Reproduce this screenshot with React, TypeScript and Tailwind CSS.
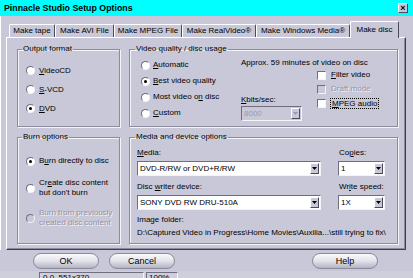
import React from "react";

const bg = "bg-[#c8c8d8]";
const sunken = "border border-t-[#6e6e80] border-l-[#6e6e80] border-r-[#f4f4f8] border-b-[#f4f4f8]";
const raised = "border border-t-white border-l-white border-r-[#4a4a5a] border-b-[#4a4a5a]";
const dim = "text-[#9494a6] [text-shadow:1px_1px_0_#f4f4f8]";

function Radio({ checked = false, disabled = false }: { checked?: boolean; disabled?: boolean }) {
  return (
    <span
      className={`flex h-[9px] w-[9px] shrink-0 items-center justify-center rounded-full ${sunken} ${
        disabled ? bg : "bg-white"
      }`}
    >
      {checked && <span className="h-[3px] w-[3px] rounded-full bg-black" />}
    </span>
  );
}

function Check({ disabled = false }: { disabled?: boolean }) {
  return <span className={`h-[9px] w-[9px] shrink-0 ${sunken} ${disabled ? bg : "bg-white"}`} />;
}

function Arrow() {
  return (
    <span className={`flex h-[11px] w-[9px] shrink-0 items-center justify-center ${bg} ${raised}`}>
      <svg width="5" height="3" viewBox="0 0 5 3">
        <polygon points="0,0 5,0 2.5,3" fill="#000" />
      </svg>
    </span>
  );
}

function Select({ value, className, disabled = false }: { value: string; className: string; disabled?: boolean }) {
  return (
    <div
      className={`flex h-[15px] items-center pr-[1px] ${sunken} ${className} ${
        disabled ? `${bg} text-[#9a9aac]` : "bg-white"
      }`}
    >
      <span className="flex-1 truncate pl-[2px] leading-[10px]">{value}</span>
      {disabled ? (
        <span className={`flex h-[11px] w-[9px] items-center justify-center ${bg} ${raised}`}>
          <svg width="5" height="3" viewBox="0 0 5 3">
            <polygon points="0,0 5,0 2.5,3" fill="#9a9aac" />
          </svg>
        </span>
      ) : (
        <Arrow />
      )}
    </div>
  );
}

function Group({
  title,
  className,
  legendClass,
  children
}: {
  title: string;
  className: string;
  legendClass: string;
  children: React.ReactNode;
}) {
  return (
    <fieldset
      className={`border border-[#8c8c9e] shadow-[inset_1px_1px_0_#f4f4f8,1px_1px_0_#f4f4f8] ${className}`}
    >
      <legend className={`px-[1px] leading-[12px] ${legendClass}`}>{title}</legend>
      {children}
    </fieldset>
  );
}

const tabs = [
  { label: "Make tape", w: "w-[46px]" },
  { label: "Make AVI File", w: "w-[59px]" },
  { label: "Make MPEG File", w: "w-[68px]" },
  { label: "Make RealVideo®", w: "w-[74px]" },
  { label: "Make Windows Media®", w: "w-[94px]" }
];

export default function App() {
  return (
    <div
      className={`flex h-[278px] w-[413px] flex-col overflow-hidden ${bg} font-['Liberation_Sans',Arial,sans-serif] text-[8px] leading-[10px] text-black`}
    >
      {/* title bar */}
      <div className="flex h-[16px] shrink-0 items-center justify-between bg-[#00ffff] pl-[4px] pr-[5px]">
        <span className="text-[8.8px] font-bold leading-[12px]">Pinnacle Studio Setup Options</span>
        <span className={`flex h-[10px] w-[10px] items-center justify-center ${bg} ${raised} text-[9px] font-bold leading-[8px]`}>
          ×
        </span>
      </div>

      <div className="flex shrink-0 flex-col border-l border-white pl-[5px] pr-[7px]">
        {/* tabs */}
        <div className="flex h-[21px] items-end pl-[3px]">
          {tabs.map((t) => (
            <div
              key={t.label}
              className={`flex h-[13px] ${t.w} items-center justify-center rounded-t-[2px] border-l border-t border-r border-l-white border-t-white border-r-[#4a4a5a]`}
            >
              {t.label}
            </div>
          ))}
          <div
            className={`relative z-10 -mb-[1px] flex h-[17px] w-[49px] items-center justify-center rounded-t-[2px] border-l border-t border-r border-l-white border-t-white border-r-[#4a4a5a] ${bg}`}
          >
            Make disc
          </div>
        </div>

        {/* panel */}
        <div className="h-[213px] border border-t-white border-l-white border-r-[#3e3e4e] border-b-[#3e3e4e] pl-[10px] pt-[5px] shadow-[inset_-1px_-1px_0_#8c8c9e]">
          <div className="grid grid-cols-[103px_269px] grid-rows-[84px_113px] gap-x-[9px] gap-y-[4px]">
            <Group title="Output format" className="h-[84px]" legendClass="ml-[4px]">
              <div className="flex flex-col pl-[8px] pt-[6px]">
                {[
                  { u: "V", rest: "ideoCD" },
                  { u: "S", rest: "-VCD" },
                  { u: "D", rest: "VD", checked: true }
                ].map((r) => (
                  <div key={r.rest} className="flex h-[19px] items-center gap-[4px]">
                    <Radio checked={r.checked} />
                    <span>
                      <u>{r.u}</u>
                      {r.rest}
                    </span>
                  </div>
                ))}
              </div>
            </Group>

            <Group title="Video quality / disc usage" className="h-[84px]" legendClass="ml-[5px]">
              <div className="flex pt-[2px]">
                <div className="flex w-[111px] flex-col pl-[11px]">
                  <div className="flex h-[16px] items-center gap-[3px]">
                    <Radio />
                    <span>
                      <u>A</u>utomatic
                    </span>
                  </div>
                  <div className="flex h-[16px] items-center gap-[3px]">
                    <Radio checked />
                    <span>
                      <u>B</u>est video quality
                    </span>
                  </div>
                  <div className="flex h-[16px] items-center gap-[3px]">
                    <Radio />
                    <span>
                      Most video o<u>n</u> disc
                    </span>
                  </div>
                  <div className="flex h-[16px] items-center gap-[3px]">
                    <Radio />
                    <span>
                      <u>C</u>ustom
                    </span>
                  </div>
                </div>
                <div className="flex flex-1 flex-col">
                  <div className="h-[11px] leading-[11px]">Approx. 59 minutes of video on disc</div>
                  <div className="flex">
                    <div className="flex w-[76px] flex-col">
                      <span className="mt-[27px]">
                        <u>K</u>bits/sec:
                      </span>
                      <Select value="8000" className="mt-[1px] w-[61px]" disabled />
                    </div>
                    <div className="flex flex-col">
                      <div className="flex h-[14px] items-center gap-[5px]">
                        <Check />
                        <span>
                          <u>F</u>ilter video
                        </span>
                      </div>
                      <div className="flex h-[14px] items-center gap-[5px]">
                        <Check disabled />
                        <span className={dim}>Draft mode</span>
                      </div>
                      <div className="flex h-[14px] items-center gap-[4px]">
                        <Check />
                        <span className="border border-dotted border-black px-[1px] leading-[9px]">
                          <u>M</u>PEG audio
                        </span>
                      </div>
                    </div>
                  </div>
                </div>
              </div>
            </Group>

            <Group title="Burn options" className="h-[113px]" legendClass="ml-[4px]">
              <div className="flex flex-col pl-[8px]">
                <div className="mt-[13px] flex items-center gap-[4px]">
                  <Radio checked />
                  <span>
                    B<u>u</u>rn directly to disc
                  </span>
                </div>
                <div className="mt-[12px] flex items-center gap-[4px]">
                  <Radio />
                  <span>
                    Cr<u>e</u>ate disc content
                    <br />
                    but don't burn
                  </span>
                </div>
                <div className="mt-[10px] flex items-center gap-[4px]">
                  <Radio disabled />
                  <span className={dim}>
                    Burn from previously
                    <br />
                    created disc content
                  </span>
                </div>
              </div>
            </Group>

            <Group title="Media and device options" className="h-[113px]" legendClass="ml-[5px]">
              <div className="flex flex-col pl-[7px]">
                <div className="mt-[5px] flex gap-[17px]">
                  <div className="flex w-[184px] flex-col">
                    <span>
                      <u>M</u>edia:
                    </span>
                    <Select value="DVD-R/RW or DVD+R/RW" className="mt-[3px] w-[184px]" />
                  </div>
                  <div className="flex w-[47px] flex-col">
                    <span className="pl-[1px]">
                      Co<u>p</u>ies:
                    </span>
                    <Select value="1" className="mt-[3px] w-[47px]" />
                  </div>
                </div>
                <div className="mt-[6px] flex gap-[17px]">
                  <div className="flex w-[184px] flex-col">
                    <span>
                      Disc <u>w</u>riter device:
                    </span>
                    <Select value="SONY DVD RW DRU-510A" className="mt-[3px] w-[184px]" />
                  </div>
                  <div className="flex w-[47px] flex-col">
                    <span className="pl-[1px]">
                      Wr<u>i</u>te speed:
                    </span>
                    <Select value="1X" className="mt-[3px] w-[47px]" />
                  </div>
                </div>
                <span className="mt-[5px]">Image folder:</span>
                <span className="mt-[3px] whitespace-nowrap">
                  D:\Captured Video in Progress\Home Movies\Auxilia...\still trying to fix\
                </span>
              </div>
            </Group>
          </div>
        </div>
      </div>

      {/* buttons */}
      <div className="mt-[3px] flex h-[16px] shrink-0 items-center pl-[33px] pr-[35px]">
        {["OK", "Cancel"].map((b) => (
          <div
            key={b}
            className="mr-[10px] flex h-[16px] w-[66px] items-center justify-center rounded-full border border-[#8a8a9c] bg-gradient-to-b from-[#fafafc] via-[#e2e2ea] to-[#b4b4c4] text-[9px]"
          >
            {b}
          </div>
        ))}
        <div className="ml-auto flex h-[16px] w-[66px] items-center justify-center rounded-full border border-[#8a8a9c] bg-gradient-to-b from-[#fafafc] via-[#e2e2ea] to-[#b4b4c4] text-[9px]">
          Help
        </div>
      </div>

      {/* status bar */}
      <div className="mt-[2px] flex h-[16px] shrink-0 items-start bg-[#cfcfdc] pt-[1px]">
        <div className="w-[39px]" />
        <div className={`h-[14px] w-[105px] pl-[3px] ${sunken}`}>0,0, 551x370</div>
        <div className={`ml-[2px] h-[14px] w-[32px] pl-[2px] ${sunken}`}>100%</div>
      </div>
    </div>
  );
}
